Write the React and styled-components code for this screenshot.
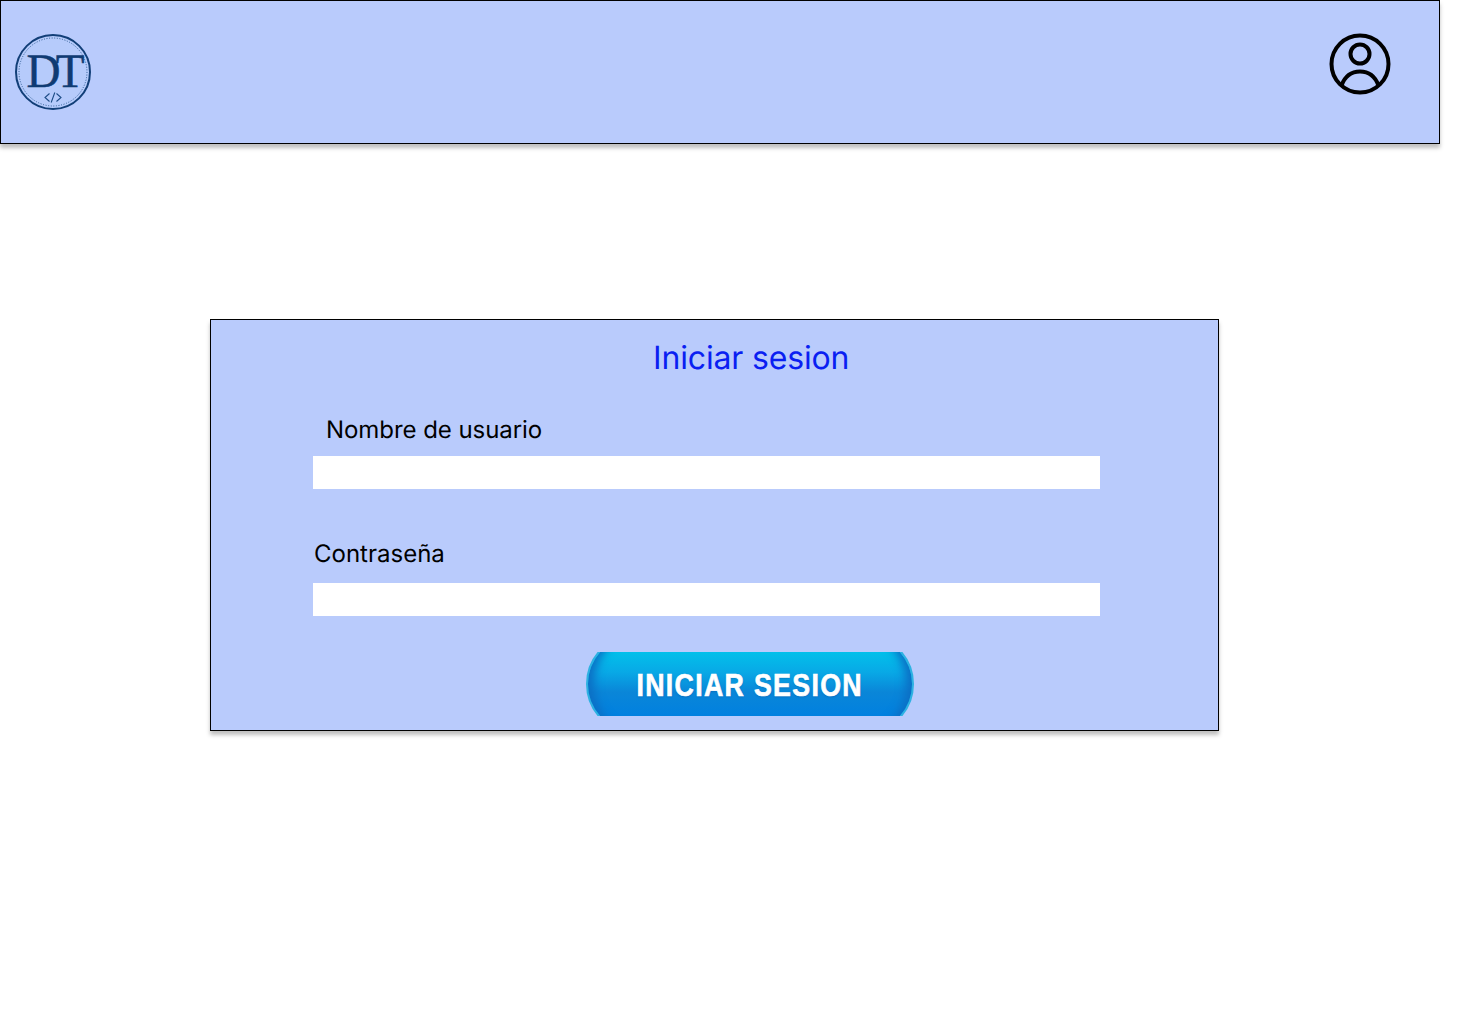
import React from "react";
import styled, { createGlobalStyle } from "styled-components";

const Global = createGlobalStyle`
  html, body { margin: 0; padding: 0; background: #fff; }
  body {
    font-family: Inter, "Liberation Sans", sans-serif;
    color: #000;
    text-rendering: geometricPrecision;
  }
  * { box-sizing: border-box; }
`;

const Page = styled.div`
  width: 1465px;
  height: 1024px;
  overflow: hidden;
  display: flex;
  flex-direction: column;
`;

const Header = styled.header`
  width: 1440px;
  height: 144px;
  flex: none;
  background: #b9cbfc;
  border: 1px solid #000;
  box-shadow: 0 4px 4px rgba(0, 0, 0, 0.25);
  display: flex;
  justify-content: space-between;
  align-items: flex-start;
  padding: 32px 47.5px 0 13px;
`;

const LogoBox = styled.div`
  width: 78px;
  height: 78px;
  flex: none;
`;

const ProfileBox = styled.div`
  width: 64px;
  height: 64px;
  flex: none;
  margin-top: -1px;
`;

const Card = styled.main`
  width: 1009px;
  height: 412px;
  flex: none;
  margin: 175px 0 0 210px;
  background: #b9cbfc;
  border: 1px solid #000;
  box-shadow: 0 4px 4px rgba(0, 0, 0, 0.25);
  padding: 18px 0 0 102px;
  display: flex;
  flex-direction: column;
`;

const Title = styled.h1`
  margin: 0 0 38px 340px;
  font-size: 32px;
  line-height: 40px;
  height: 39px;
  font-weight: 400;
  letter-spacing: -0.16px;
  color: #0a1ff2;
  white-space: nowrap;
`;

const Label = styled.label`
  display: block;
  font-size: 24px;
  line-height: 29px;
  font-weight: 400;
  letter-spacing: ${(p) => p.$tracking}px;
  padding-left: ${(p) => p.$indent}px;
  margin-bottom: ${(p) => p.$gap}px;
`;

const Input = styled.input`
  display: block;
  width: 787px;
  height: 33px;
  border: 0;
  padding: 0 8px;
  background: #fff;
  margin-bottom: ${(p) => p.$gap}px;
  flex: none;
`;

const ButtonClip = styled.button`
  align-self: flex-start;
  margin-left: 273px;
  width: 328px;
  height: 64px;
  padding: 0;
  border: 0;
  background: transparent;
  overflow: hidden;
  display: flex;
  align-items: center;
  justify-content: center;
  flex: none;
`;

const ButtonPill = styled.span`
  width: 328px;
  height: 100px;
  flex: none;
  border-radius: 50px;
  border: 2px solid #2eb2e2;
  background:
    linear-gradient(180deg, #02c0ea 16px, #08a9e6 36px, #0a86d8 56px, #0080e0 82px, #0080e0 100%);
  box-shadow:
    inset 12px 0 10px -6px #0c6fc4,
    inset -12px 0 10px -6px #0c6fc4;
  display: flex;
  align-items: center;
  justify-content: center;
`;

const ButtonText = styled.span`
  font-family: "Liberation Sans", Arial, sans-serif;
  font-weight: 700;
  font-size: 32px;
  line-height: 36px;
  margin-top: 2px;
  letter-spacing: 1.6px;
  color: #fff;
  white-space: nowrap;
  display: inline-block;
  transform: scaleX(0.835);
  -webkit-text-stroke: 0.7px #fff;
  text-shadow: 0 1px 2px rgba(0, 60, 140, 0.4);
`;

function Logo() {
  return (
    <svg width="78" height="78" viewBox="0 0 78 78" aria-label="DT logo">
      <circle cx="39" cy="39" r="37" fill="#b6cbfb" stroke="#123f78" strokeWidth="2" />
      <circle cx="39" cy="39" r="34" fill="none" stroke="#2b5a92" strokeWidth="1" strokeDasharray="1 1.6" />
      <text
        transform="translate(39 54) scale(0.98 1)"
        textAnchor="middle"
        fontFamily="'Liberation Serif', serif"
        fontSize="48"
        fill="#0f3b73"
        stroke="#0f3b73"
        strokeWidth="0.5"
        letterSpacing="-5"
      >
        DT
      </text>
      <path d="M35.5 60.5 L31 64.5 L35.5 68.5 M42.5 60.5 L47 64.5 L42.5 68.5 M40.8 59.5 L37.2 69.5" fill="none" stroke="#1d4c86" strokeWidth="1.1" />
    </svg>
  );
}

function ProfileIcon() {
  return (
    <svg width="64" height="64" viewBox="0 0 64 64" aria-label="Perfil" fill="none" stroke="#000" strokeWidth="4">
      <circle cx="32" cy="32" r="28.5" />
      <circle cx="32" cy="22" r="9.5" />
      <path d="M13.5 53.5 C17 44 24 39.5 32 39.5 C40 39.5 47 44 50.5 53.5" />
    </svg>
  );
}

export default function App() {
  return (
    <Page>
      <Global />
      <Header>
        <LogoBox><Logo /></LogoBox>
        <ProfileBox><ProfileIcon /></ProfileBox>
      </Header>
      <Card>
        <Title>Iniciar sesion</Title>
        <Label $indent={13} $gap={12} $tracking={-0.06}>Nombre de usuario</Label>
        <Input $gap={50} />
        <Label $indent={1} $gap={15} $tracking={0}>Contraseña</Label>
        <Input $gap={36} />
        <ButtonClip>
          <ButtonPill><ButtonText>INICIAR SESION</ButtonText></ButtonPill>
        </ButtonClip>
      </Card>
    </Page>
  );
}
